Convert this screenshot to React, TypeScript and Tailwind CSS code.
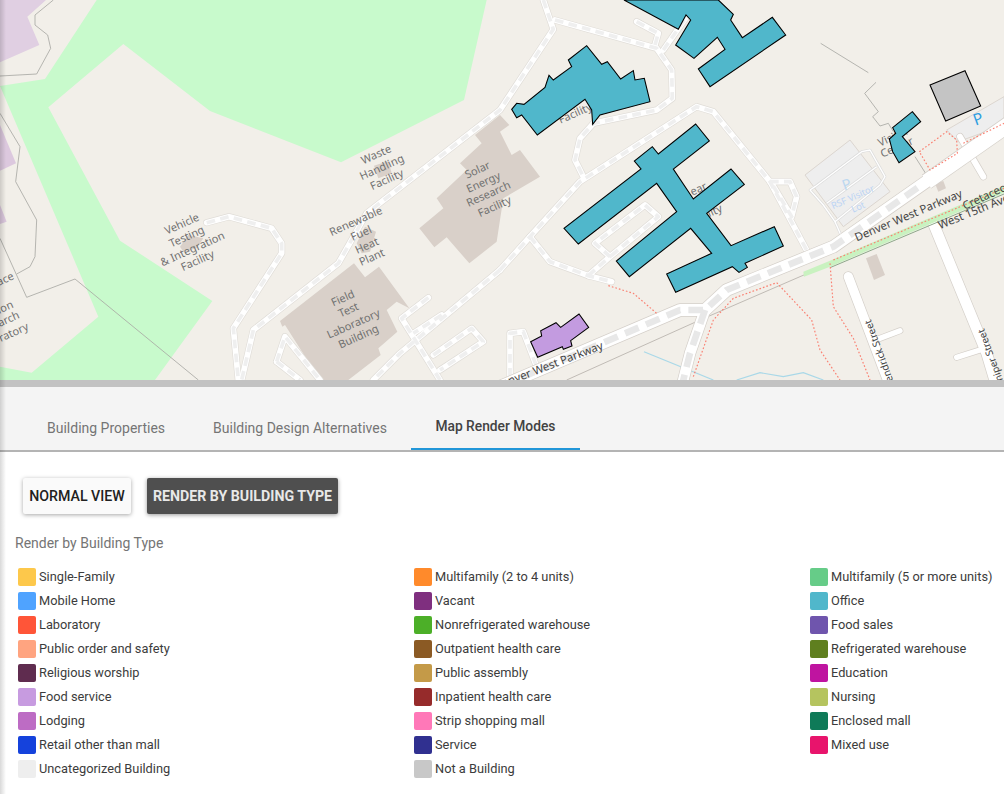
const legendRows: [string, string][][] = [
  [["#fdc84b", "Single-Family"], ["#ff8a2b", "Multifamily (2 to 4 units)"], ["#66cc88", "Multifamily (5 or more units)"]],
  [["#4fa3ff", "Mobile Home"], ["#7f2f7f", "Vacant"], ["#50b7cb", "Office"]],
  [["#ff5538", "Laboratory"], ["#4caf28", "Nonrefrigerated warehouse"], ["#6f55ad", "Food sales"]],
  [["#ffa480", "Public order and safety"], ["#8b5a24", "Outpatient health care"], ["#5f7f1f", "Refrigerated warehouse"]],
  [["#5f2c4f", "Religious worship"], ["#c49a48", "Public assembly"], ["#bf14a0", "Education"]],
  [["#c79be0", "Food service"], ["#962b2b", "Inpatient health care"], ["#b5c45f", "Nursing"]],
  [["#bd6cc4", "Lodging"], ["#ff78b8", "Strip shopping mall"], ["#0f7a58", "Enclosed mall"]],
  [["#1542dc", "Retail other than mall"], ["#303090", "Service"], ["#e8146c", "Mixed use"]],
  [["#eeeeee", "Uncategorized Building"], ["#c8c8c8", "Not a Building"], ["", ""]],
];

const serviceRoads = [
  "620,668 687,650 815,685 845,730 845,760 700,985 715,1140",
  "1630,0 1660,88 1500,330 1100,640 1015,790 760,990 725,1140",
  "1665,60 1970,145 2015,210 2017,295 1970,330 1780,370 1740,415 1725,480 1750,530",
  "1500,810 1590,710 1740,545 2090,320 2140,335 2310,545 2425,760",
  "1590,710 1650,785 1765,827 1835,845",
  "1765,827 1830,770 1785,730 1935,615 1975,650 1830,770",
  "1910,65 1975,100 1965,135",
  "1990,150 2060,50",
  "2310,545 2370,545 2390,590 2375,650 2315,550",
  "1500,810 1200,1060 1120,1140",
  "1285,893 1205,955 1320,1140",
  "1325,945 1240,1000",
  "1300,1065 1415,985 1450,1025 1320,1110",
  "830,1085 855,1010 960,1140",
  "830,1085 900,1140",
  "1530,1130 1530,1000 1570,995 1610,1100",
];

const redPaths = [
  "1825,857 1900,880 1970,940",
  "2080,1130 2140,960 2200,895 2330,848 2435,960 2460,1050 2520,1140",
  "2490,790 2500,920 2560,1015 2610,1140",
  "2758,455 2840,395 2870,420 2872,460 2790,510 2758,455",
  "2890,430 3012,370",
  "2500,780 3012,565",
];

const mapLabels: [string, number, number][] = [
  ["Vehicle", 550, 682], ["Testing", 565, 720], ["& Integration", 582, 757], ["Facility", 597, 792],
  ["Waste", 1133, 474], ["Handling", 1150, 512], ["Facility", 1165, 549],
  ["Renewable", 1072, 674], ["Fuel", 1088, 710], ["Heat", 1105, 747], ["Plant", 1120, 782],
  ["Field", 1033, 905], ["Test", 1050, 940], ["Laboratory", 1065, 982], ["Building", 1080, 1020],
  ["Solar", 1437, 520], ["Energy", 1455, 557], ["Research", 1470, 592], ["Facility", 1488, 630],
  ["ace", 20, 847], ["ion", 20, 932], ["arch", 30, 967], ["ratory", 45, 1007],
  ["Facility", 1730, 350], ["ility", 2145, 644], ["ear", 2100, 577], ["Visitor", 2685, 420], ["Center", 2695, 452],
];

const MapLabel = ({ text, x, y, rotate = -24, size = 33, fill = "#707070", weight = 400 }: { text: string; x: number; y: number; rotate?: number; size?: number; fill?: string; weight?: number }) => (
  <text x={x} y={y} textAnchor="middle" transform={`rotate(${rotate} ${x} ${y})`} fontSize={size} fontWeight={weight} fill={fill} fontFamily="'Noto Sans', sans-serif">
    {text}
  </text>
);

const BuildingMap = () => (
  <svg viewBox="0 0 3012 1140" className="block w-full h-full">
    <rect width="3012" height="1140" fill="#f2efe9" />

    {/* landuse */}
    <polygon fill="#c8facc" points="290,0 135,237 0,258 295,950 95,1118 0,1100 0,1140 465,1140 637,903 360,722 145,322 370,132 630,333 1023,487 1392,300 1460,0" />
    <polygon fill="#e0cfe2" points="0,187 118,135 82,50 138,0 0,0" />
    <polygon fill="#dcc8de" points="0,375 48,490 0,512" />
    <polygon fill="#dcc8de" points="0,615 20,665 0,672" />

    {/* boundaries */}
    <g fill="none" stroke="#a8a8a4" strokeWidth="2.5">
      <polyline points="160,0 105,45 105,75 143,105 152,145 110,222 0,228" />
      <polyline points="0,340 60,440 47,545 110,660 105,770 90,800 50,822" />
      <polyline points="0,715 80,892 225,837 595,1140" />
      <polyline points="2462,130 2605,218" />
      <polyline points="2628,247 2594,280 2635,335 2618,350 2640,378 2665,370 2680,395" />
      <polyline points="2745,470 2780,525" />
    </g>

    {/* small buildings */}
    <g fill="#d9d0c9">
      <polygon points="1258,685 1330,625 1310,595 1400,510 1380,490 1445,430 1425,405 1500,345 1528,375 1500,395 1535,465 1560,450 1620,530 1510,595 1490,725 1408,790 1340,712 1303,742" />
      <polygon points="840,963 1062,790 1095,832 1137,800 1228,925 1190,905 1160,930 1192,995 1135,1045 1142,1065 1045,1140 960,1140 855,975 847,980" />
      <polygon points="1122,497 1165,483 1175,520 1135,535" />
      <polygon points="540,740 565,705 610,715 590,745 550,755" />
      <polygon points="1070,730 1095,680 1128,695 1110,755 1085,760" />
      <polygon points="2598,775 2630,762 2655,825 2622,840" />
      <polygon points="2805,550 2830,543 2838,565 2815,575" />
    </g>

    {/* parking lots */}
    <polygon fill="#eeeeee" stroke="#dcd6d0" strokeWidth="3" points="2415,525 2550,420 2670,575 2530,680" />
    <polygon fill="#eeeeee" stroke="#dcd6d0" strokeWidth="3" points="2840,390 3012,290 3012,375 2875,425" />

    {/* water */}
    <g fill="none" stroke="#a9d8e8" strokeWidth="3.5">
      <polyline points="1932,1055 2140,1140" />
      <polyline points="2210,1140 2280,1118 2350,1130 2410,1118 2470,1140" />
    </g>

    {/* service roads */}
    <g fill="none" strokeLinejoin="round" strokeLinecap="round">
      {serviceRoads.map((pts, i) => <polyline key={`c${i}`} points={pts} stroke="#e0ddd8" strokeWidth="21" />)}
      {serviceRoads.map((pts, i) => <polyline key={`w${i}`} points={pts} stroke="#ffffff" strokeWidth="17" />)}
      {serviceRoads.map((pts, i) => <polyline key={`d${i}`} points={pts} stroke="#efefef" strokeWidth="11" strokeDasharray="26 16" strokeLinecap="butt" />)}
    </g>

    {/* parking aisles */}
    <g fill="none" stroke="#dcdcdc" strokeWidth="8" strokeLinejoin="round">
      <polyline points="2445,560 2585,455 2610,450 2655,530 2640,555 2505,665 2470,615 2430,570 2445,560" />
      <polyline points="2480,610 2630,500" />
      <polyline points="2505,665 2525,710" />
    </g>
    <g fill="none" stroke="#ffffff" strokeWidth="4" strokeLinejoin="round">
      <polyline points="2445,560 2585,455 2610,450 2655,530 2640,555 2505,665 2470,615 2430,570 2445,560" />
      <polyline points="2480,610 2630,500" />
      <polyline points="2505,665 2525,710" />
    </g>

    {/* streets */}
    <g fill="none" strokeLinecap="round" strokeLinejoin="round">
      <polyline points="2800,670 2960,1060 2990,1160" stroke="#d4cfc9" strokeWidth="36" />
      <polyline points="2545,830 2670,1160" stroke="#d4cfc9" strokeWidth="32" />
      <polyline points="2640,1015 2700,992" stroke="#d4cfc9" strokeWidth="20" />
      <polyline points="2870,1072 2940,1050" stroke="#d4cfc9" strokeWidth="20" />
      <polyline points="2880,410 2950,530" stroke="#d4cfc9" strokeWidth="22" />
      <polyline points="2800,670 2960,1060 2990,1160" stroke="#ffffff" strokeWidth="32" />
      <polyline points="2545,830 2670,1160" stroke="#ffffff" strokeWidth="28" />
      <polyline points="2640,1015 2700,992" stroke="#ffffff" strokeWidth="16" />
      <polyline points="2870,1072 2940,1050" stroke="#ffffff" strokeWidth="16" />
      <polyline points="2880,410 2950,530" stroke="#ffffff" strokeWidth="18" />
    </g>

    {/* West 15th Avenue with the cycleway */}
    <polyline fill="none" stroke="#c0bbb5" strokeWidth="3" points="1700,1140 2100,960 2400,830 3012,570" />
    <polygon fill="#c9f2c0" points="2410,815 2490,782 3012,558 3012,578 2490,800 2412,830" />
    <polyline fill="none" stroke="#8ea88a" strokeWidth="3" points="2490,803 3012,582" />

    {/* Denver West Parkway */}
    <g fill="none" strokeLinejoin="round">
      <polyline points="1500,1160 2040,930 2115,930 2180,870 2500,740 2800,530 3030,370" stroke="#d4cfc9" strokeWidth="40" />
      <polyline points="2115,930 2070,1060 2045,1160" stroke="#d4cfc9" strokeWidth="36" />
      <polyline points="2780,545 3030,370" stroke="#d4cfc9" strokeWidth="50" />
      <polyline points="1500,1160 2040,930 2115,930 2180,870 2500,740 2800,530 3030,370" stroke="#ffffff" strokeWidth="36" />
      <polyline points="2115,930 2070,1060 2045,1160" stroke="#ffffff" strokeWidth="32" />
      <polyline points="2780,545 3030,370" stroke="#ffffff" strokeWidth="46" />
      <polyline points="1500,1160 2040,930 2115,930 2180,870 2500,740 2760,558" stroke="#e8e8e8" strokeWidth="20" strokeDasharray="44 24" />
      <polyline points="2115,930 2070,1060 2045,1160" stroke="#e8e8e8" strokeWidth="20" strokeDasharray="44 24" />
    </g>

    {/* footways */}
    <g fill="none" stroke="#fa8072" strokeWidth="3.5" strokeDasharray="5 6">
      {redPaths.map((pts, i) => <polyline key={i} points={pts} />)}
    </g>

    {/* map labels under the highlighted buildings */}
    {mapLabels.map(([text, x, y], i) => <MapLabel key={i} text={text} x={x} y={y} />)}

    {/* highlighted buildings */}
    <g stroke="#000000" strokeWidth="3.2" strokeLinejoin="miter" fill="#50b7cb">
      <polygon points="1872,0 2035,88 2058,45 2072,60 2027,135 2082,175 2152,112 2175,148 2095,207 2130,260 2357,105 2317,52 2227,113 2192,60 2200,43 2155,0" />
      <polygon points="1535,328 1550,310 1572,313 1635,262 1647,226 1660,240 1715,200 1705,180 1760,137 1805,193 1822,185 1862,237 1900,212 1905,240 1933,235 1950,305 1800,345 1778,373 1775,330 1755,298 1612,405 1565,345 1550,353" />
      <polygon points="2087,372 2128,423 2020,507 2080,597 2193,507 2233,553 2120,640 2193,737 2323,680 2350,738 2235,790 2242,802 2217,817 2197,800 2027,877 2000,822 2135,760 2072,685 1888,830 1849,783 2030,635 1970,550 1735,732 1692,685 1923,507 1903,483 1957,440 1975,462" />
      <polygon points="2737,335 2762,365 2707,410 2745,455 2697,488 2678,455 2668,417 2687,400 2678,383" />
      <polygon fill="#c4c4c4" points="2790,255 2895,212 2942,318 2837,363" />
      <polygon fill="#c39be0" points="1592,1025 1625,1008 1622,992 1668,968 1682,982 1737,942 1766,982 1712,1022 1716,1038 1690,1048 1687,1040 1613,1072" />
    </g>

    {/* road and parking names */}
    <MapLabel text="Denver West Parkway" x={2730} y={657} rotate={-23} size={34} fill="#444444" />
    <MapLabel text="Denver West Parkway" x={1650} y={1108} rotate={-21} size={34} fill="#444444" />
    <MapLabel text="Cretaceous" x={2975} y={592} rotate={-25} size={34} fill="#444444" />
    <MapLabel text="West 15th Ave" x={2925} y={645} rotate={-22} size={34} fill="#444444" />
    <MapLabel text="Hendrick Street" x={2650} y={1060} rotate={-110} size={30} fill="#444444" />
    <MapLabel text="Juniper Street" x={2985} y={1075} rotate={-110} size={30} fill="#444444" />
    <MapLabel text="P" x={2940} y={372} rotate={-20} size={48} fill="#2f9fe0" />
    <MapLabel text="P" x={2545} y={568} rotate={-20} size={44} fill="#bcd8f0" />
    <MapLabel text="RSF Visitor" x={2562} y={600} rotate={-24} size={28} fill="#bcd4f4" />
    <MapLabel text="Lot" x={2578} y={630} rotate={-24} size={28} fill="#bcd4f4" />
  </svg>
);

const tabs = ["Building Properties", "Building Design Alternatives"];

const App = () => {
  return (
    <div className="relative w-[1004px] h-[794px] overflow-hidden bg-white font-['Roboto',sans-serif]">
      <div className="h-[380px]">
        <BuildingMap />
      </div>
      <div className="h-[7px] bg-[#c2c2c2]" />

      {/* Tabs */}
      <div className="flex h-[65px] items-end pl-[23px] bg-[#f4f4f4] border-b-2 border-[#b4b4b4]">
        {tabs.map((tab) => (
          <div key={tab} className="flex h-[45px] items-center px-6 text-sm text-[#757575]">
            {tab}
          </div>
        ))}
        <div className="flex h-[45px] w-[169px] items-center justify-center border-b-2 border-[#2196d8] text-[13.8px] font-medium text-[#424242]">
          Map Render Modes
        </div>
      </div>

      {/* Buttons */}
      <div className="flex gap-4 pt-[26px] pl-[23px]">
        <button className="h-9 w-[108px] rounded-[2px] bg-[#fafafa] pt-px text-[14.2px] font-medium uppercase text-[#212121] shadow-[0_1px_4px_rgba(0,0,0,0.35)]">
          Normal view
        </button>
        <button className="h-9 w-[191px] rounded-[2px] bg-[#4f4f4f] pt-px text-[14.2px] font-bold uppercase text-[#e8e8e8] shadow-[0_1px_4px_rgba(0,0,0,0.4)]">
          Render by Building Type
        </button>
      </div>

      <div className="pt-[20px] pl-[15px] text-sm leading-[18px] text-[#757575]">Render by Building Type</div>

      {/* Legend */}
      <div className="pt-[13px] pl-[18px]">
        {legendRows.map((row, r) => (
          <div key={r} className="grid h-6 grid-cols-[396px_396px_1fr] items-center">
            {row.map(([color, label]) => (
              <div key={label || "empty"} className="flex items-center gap-[3px]">
                {label && <span className="h-[18px] w-[18px] rounded-[2px]" style={{ backgroundColor: color }} />}
                <span className="text-[12.8px] text-[#3c3c3c]">{label}</span>
              </div>
            ))}
          </div>
        ))}
      </div>

      {/* panel shadow on the left edge */}
      <div className="absolute inset-y-0 left-0 w-[6px] bg-gradient-to-r from-black/15 to-transparent" />
    </div>
  );
};

export default App;
